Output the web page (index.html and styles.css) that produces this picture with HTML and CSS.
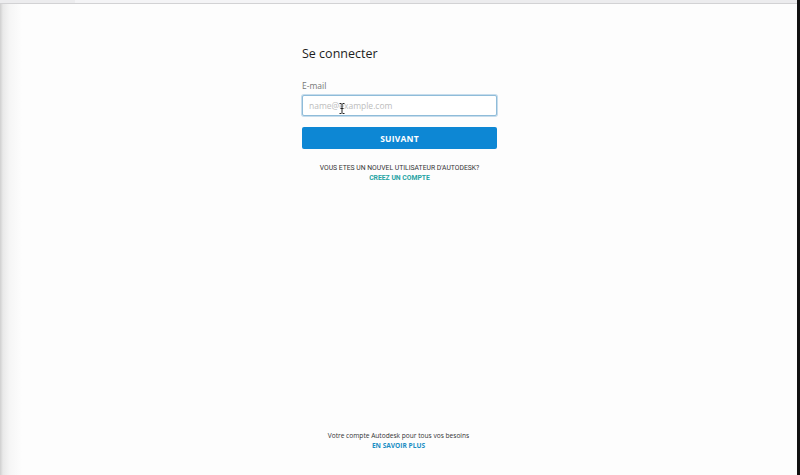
FILE: index.html
```html
<!DOCTYPE html>
<html lang="fr">
<head>
    <meta charset="UTF-8">
    <meta name="viewport" content="width=device-width, initial-scale=1.0">
    <title>Se connecter - Autodesk</title>
    <link rel="stylesheet" href="styles.css">
</head>
<body>
    <div class="window">
        <div class="topbar"><div class="tab"></div></div>

        <div class="content">
            <div class="login">
                <h1 class="title">Se connecter</h1>

                <label class="field-label" for="email">E-mail</label>
                <div class="input-wrap">
                    <input type="text" class="email-input" id="email" placeholder="name@example.com">
                    <svg class="ibeam" width="6" height="11" viewBox="0 0 6 11">
                        <path d="M0.5 0.5h2M3.5 0.5h2M3 1v9M0.5 10.5h2M3.5 10.5h2M1.5 5.5h3" stroke="#222" stroke-width="1" fill="none"/>
                    </svg>
                </div>

                <button class="btn-next">SUIVANT</button>

                <div class="new-user">
                    <div>VOUS ETES UN NOUVEL UTILISATEUR D'AUTODESK?</div>
                    <a href="#" class="create-link">CREEZ UN COMPTE</a>
                </div>
            </div>

            <div class="footer">
                <div>Votre compte Autodesk pour tous vos besoins</div>
                <a href="#" class="more-link">EN SAVOIR PLUS</a>
            </div>
        </div>
    </div>
</body>
</html>
```

FILE: styles.css
```css
body {
    margin: 0;
    background-color: #fdfdfd;
    font-family: "Open Sans", "Noto Sans", sans-serif;
    color: #222;
}
.window {
    height: 475px;
    display: flex;
    flex-direction: column;
    box-sizing: border-box;
    border-right: 3px solid #111;
    background: linear-gradient(to right, #cfcfcf 0, #e9e9e9 3px, #f6f6f6 10px, #fdfdfd 22px);
}
.topbar {
    height: 3px;
    background-color: #ececee;
    border-bottom: 1px solid #d2d2d4;
    padding-left: 75px;
}
.tab {
    width: 295px;
    height: 3px;
    background-color: #f4f4f6;
}
.content {
    flex: 1;
    display: flex;
    flex-direction: column;
    align-items: center;
    justify-content: space-between;
}
.login {
    width: 195px;
    padding-top: 41px;
    margin-left: 2px;
}
.title {
    margin: 0;
    font-size: 12.5px;
    line-height: 18px;
    font-weight: 400;
    color: #1e1e1e;
}
.field-label {
    display: block;
    margin-top: 17px;
    font-size: 8.5px;
    line-height: 12px;
    color: #777;
}
.input-wrap {
    position: relative;
    margin-top: 3px;
}
.email-input {
    display: block;
    box-sizing: border-box;
    width: 195px;
    height: 21px;
    padding: 0 6px;
    border: 1px solid #8fbcd9;
    border-radius: 2px;
    box-shadow: 0 0 0 1px #c6dcec;
    background-color: #fff;
    font-family: "Open Sans", sans-serif;
    font-size: 8.5px;
    outline: none;
}
.email-input::placeholder {
    color: #bdbdbd;
}
.ibeam {
    position: absolute;
    left: 37px;
    top: 8px;
}
.btn-next {
    display: block;
    width: 195px;
    height: 22px;
    margin-top: 11px;
    border: none;
    border-radius: 2px;
    background-color: #0d87d4;
    color: #fff;
    font-family: "Open Sans", sans-serif;
    font-weight: 700;
    font-size: 8.5px;
    letter-spacing: 0.2px;
    cursor: pointer;
}
.new-user {
    margin-top: 14px;
    text-align: center;
    font-family: "Roboto", sans-serif;
    font-size: 6.8px;
    line-height: 10px;
    color: #333;
}
.create-link {
    color: #25a3a3;
    font-weight: 700;
    text-decoration: none;
}
.footer {
    padding-bottom: 25px;
    text-align: center;
    font-size: 6.6px;
    line-height: 9.5px;
    color: #333;
}
.more-link {
    color: #1b8ec4;
    font-weight: 700;
    text-decoration: none;
}
```
